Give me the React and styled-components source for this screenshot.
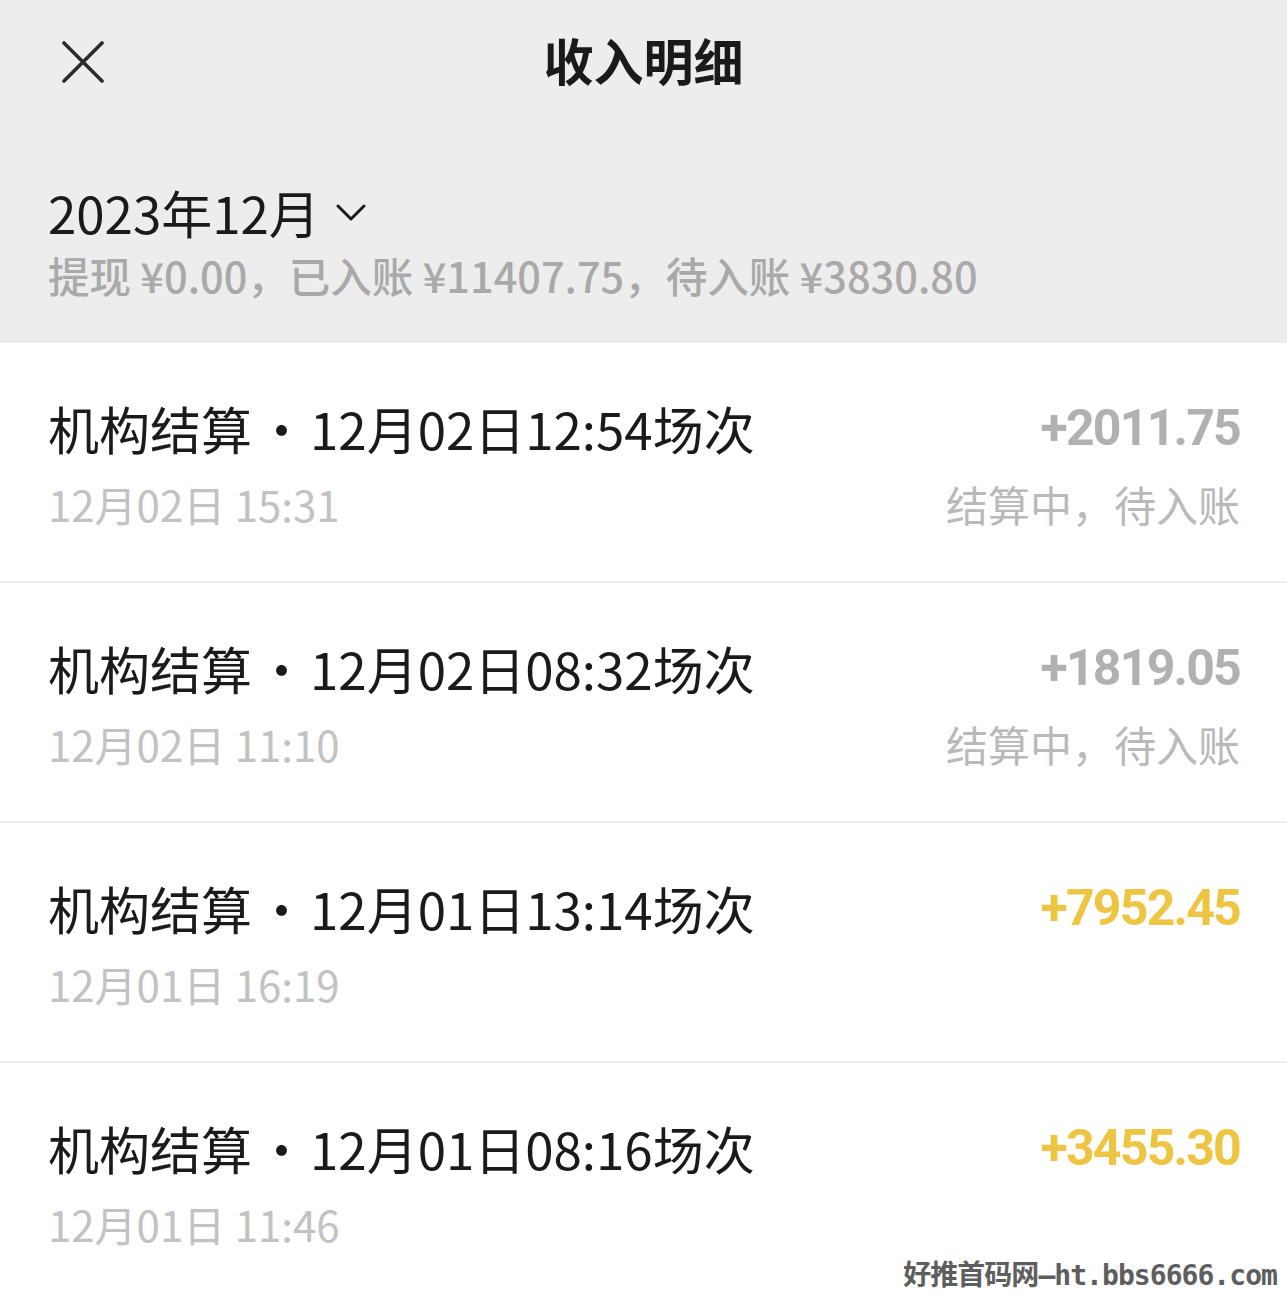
import React from 'react';
import styled, { createGlobalStyle } from 'styled-components';

const GlobalStyle = createGlobalStyle`
  html, body {
    margin: 0;
    padding: 0;
    background: #ffffff;
  }
  body {
    font-family: "Noto Sans CJK SC", "Noto Sans", sans-serif;
    color: #1a1a1a;
  }
`;

const Page = styled.div`
  position: relative;
  width: 1287px;
  height: 1297px;
  overflow: hidden;
  background: #ffffff;
`;

const Header = styled.header`
  background: #ededed;
  height: 343px;
  display: flex;
  flex-direction: column;
`;

const NavBar = styled.div`
  position: relative;
  height: 124px;
  box-sizing: border-box;
  padding-bottom: 7px;
  display: flex;
  align-items: center;
  justify-content: center;
`;

const CloseButton = styled.button`
  position: absolute;
  left: 58px;
  top: 38px;
  width: 50px;
  height: 48px;
  padding: 0;
  border: none;
  background: transparent;
  display: flex;
  align-items: center;
  justify-content: center;
`;

const Title = styled.h1`
  margin: 0;
  font-size: 50px;
  font-weight: 700;
  color: #1a1a1a;
`;

const MonthBlock = styled.div`
  padding: 58px 48px 0;
  display: flex;
  flex-direction: column;
`;

const MonthPicker = styled.div`
  display: flex;
  align-items: center;
  gap: 16px;
  height: 60px;
  font-size: 51px;
  font-weight: 400;
  color: #1a1a1a;
`;

const Summary = styled.div`
  margin-top: 6px;
  font-size: 41.5px;
  line-height: 54px;
  font-weight: 500;
  color: #a9a9a9;
`;

const List = styled.div`
  display: flex;
  flex-direction: column;
`;

const Row = styled.div`
  height: 240px;
  box-sizing: border-box;
  padding: 55px 47px 0 48px;
  display: flex;
  justify-content: space-between;
  border-bottom: ${p => (p.$last ? 'none' : '2px solid #eeeeee')};
`;

const Col = styled.div`
  display: flex;
  flex-direction: column;
  align-items: ${p => (p.$right ? 'flex-end' : 'flex-start')};
  gap: 18px;
`;

const RowTitle = styled.div`
  font-size: 51px;
  line-height: 60px;
  color: #1a1a1a;
  white-space: nowrap;
`;

const Dot = styled.span`
  margin: 0 3px 0 4px;
`;

const RowTime = styled.div`
  font-size: 42px;
  line-height: 56px;
  color: #c2c2c2;
`;

const Amount = styled.div`
  font-family: "Roboto", "Noto Sans", sans-serif;
  font-size: 50px;
  line-height: 60px;
  font-weight: 700;
  letter-spacing: -1.8px;
  color: ${p => (p.$pending ? '#b1b1b1' : '#eec443')};
`;

const Status = styled.div`
  font-size: 42px;
  line-height: 56px;
  color: #b9b9b9;
`;

const Watermark = styled.div`
  position: absolute;
  right: 10px;
  bottom: 4px;
  font-family: "DejaVu Sans Mono", "Noto Sans CJK SC", monospace;
  font-size: 28px;
  font-weight: 700;
  color: #5e5e5e;
  letter-spacing: -0.95px;
`;

const CloseIcon = () => (
  <svg width="44" height="42" viewBox="0 0 44 42" fill="none">
    <path d="M3 2 L41 40 M41 2 L3 40" stroke="#2b2b2b" strokeWidth="3.6" strokeLinecap="round" />
  </svg>
);

const Chevron = () => (
  <svg width="30" height="20" viewBox="0 0 30 20" fill="none">
    <path d="M2 4 L15 17 L28 4" stroke="#1a1a1a" strokeWidth="3" strokeLinecap="round" strokeLinejoin="round" />
  </svg>
);

const records = [
  { name: '机构结算', session: '12月02日12:54场次', time: '12月02日 15:31', amount: '+2011.75', pending: true },
  { name: '机构结算', session: '12月02日08:32场次', time: '12月02日 11:10', amount: '+1819.05', pending: true },
  { name: '机构结算', session: '12月01日13:14场次', time: '12月01日 16:19', amount: '+7952.45', pending: false },
  { name: '机构结算', session: '12月01日08:16场次', time: '12月01日 11:46', amount: '+3455.30', pending: false },
];

export default function App() {
  return (
    <Page>
      <GlobalStyle />
      <Header>
        <NavBar>
          <CloseButton aria-label="关闭">
            <CloseIcon />
          </CloseButton>
          <Title>收入明细</Title>
        </NavBar>
        <MonthBlock>
          <MonthPicker>
            2023年12月
            <Chevron />
          </MonthPicker>
          <Summary>提现 ¥0.00，已入账 ¥11407.75，待入账 ¥3830.80</Summary>
        </MonthBlock>
      </Header>
      <List>
        {records.map((r, i) => (
          <Row key={i} $last={i === records.length - 1}>
            <Col>
              <RowTitle>
                {r.name}
                <Dot>·</Dot>
                {r.session}
              </RowTitle>
              <RowTime>{r.time}</RowTime>
            </Col>
            <Col $right>
              <Amount $pending={r.pending}>{r.amount}</Amount>
              {r.pending && <Status>结算中，待入账</Status>}
            </Col>
          </Row>
        ))}
      </List>
      <Watermark>好推首码网—ht.bbs6666.com</Watermark>
    </Page>
  );
}
